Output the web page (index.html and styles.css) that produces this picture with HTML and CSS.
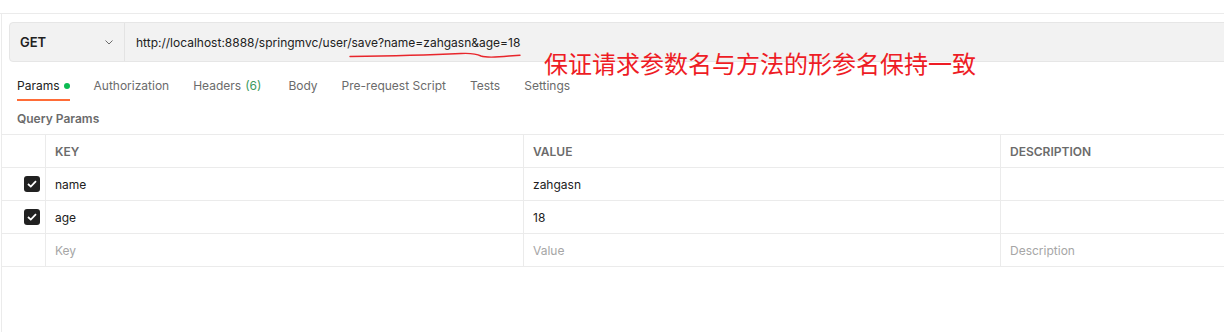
FILE: index.html
```html
<!DOCTYPE html>
<html lang="zh-CN">
<head>
  <meta charset="UTF-8" />
  <title>Postman - Query Params</title>
  <link rel="stylesheet" href="styles.css">
</head>
<body>

  <div class="top-strip"></div>

  <div class="pane">
    <!-- barra richiesta -->
    <div class="request-bar">
      <div class="method">
        <span>GET</span>
        <svg class="chevron" width="8" height="5" viewBox="0 0 8 5"><path d="M0.5 0.5 L4 4 L7.5 0.5" fill="none" stroke="#6b6b6b" stroke-width="1"/></svg>
      </div>
      <div class="url">http://localhost:8888/springmvc/user/save?name=zahgasn&amp;age=18</div>
    </div>

    <!-- tab -->
    <div class="tabs">
      <div class="tab active">Params <span class="dot"></span></div>
      <div class="tab">Authorization</div>
      <div class="tab headers">Headers <span class="count">(6)</span></div>
      <div class="tab">Body</div>
      <div class="tab">Pre-request Script</div>
      <div class="tab">Tests</div>
      <div class="tab">Settings</div>
    </div>

    <div class="section-title">Query Params</div>

    <!-- tabella parametri -->
    <div class="params-table">
      <div class="cell check"></div>
      <div class="cell head">KEY</div>
      <div class="cell head">VALUE</div>
      <div class="cell head">DESCRIPTION</div>

      <div class="cell check"><span class="checkbox"><svg width="10" height="8" viewBox="0 0 10 8"><path d="M1 4 L3.8 6.6 L9 1.2" fill="none" stroke="#fff" stroke-width="1.8"/></svg></span></div>
      <div class="cell">name</div>
      <div class="cell">zahgasn</div>
      <div class="cell"></div>

      <div class="cell check"><span class="checkbox"><svg width="10" height="8" viewBox="0 0 10 8"><path d="M1 4 L3.8 6.6 L9 1.2" fill="none" stroke="#fff" stroke-width="1.8"/></svg></span></div>
      <div class="cell">age</div>
      <div class="cell">18</div>
      <div class="cell"></div>

      <div class="cell check"></div>
      <div class="cell placeholder">Key</div>
      <div class="cell placeholder">Value</div>
      <div class="cell placeholder">Description</div>
    </div>
  </div>

  <!-- annotazione a mano -->
  <svg class="scribble" width="180" height="10" viewBox="0 0 180 10">
    <path d="M1 6.5 C40 6 80 5 112 3.5 C122 3 128 4 132 6 C138 8 145 7.5 160 6 L171 5.2" fill="none" stroke="#e8262c" stroke-width="1.4" stroke-linecap="round"/>
  </svg>
  <div class="note">保证请求参数名与方法的形参名保持一致</div>

</body>
</html>
```

FILE: styles.css
```css
/* Reset e font base */
* {
  margin: 0;
  padding: 0;
  box-sizing: border-box;
}
body {
  position: relative;
  width: 1224px;
  height: 332px;
  overflow: hidden;
  background-color: #fff;
  font-family: Inter, "Noto Sans", sans-serif;
  font-size: 12px;
  color: #212121;
}
.top-strip {
  height: 14px;
  border-bottom: 1px solid #ebebeb;
}
.pane {
  margin-left: 1px;
  height: 318px;
  border-left: 1px solid #ebebeb;
  padding-top: 8px;
  overflow: hidden;
}
/* Barra della richiesta */
.request-bar {
  display: flex;
  height: 40px;
  margin-left: 7px;
  width: 1240px;
  background-color: #f2f2f2;
  border: 1px solid #e6e6e6;
  border-radius: 4px;
}
.method {
  width: 115px;
  display: flex;
  align-items: center;
  justify-content: space-between;
  padding: 0 11px 0 10px;
  border-right: 1px solid #e3e3e3;
  font-size: 13px;
  font-weight: 600;
}
.chevron {
  margin-top: 1px;
}
.url {
  display: flex;
  align-items: center;
  padding-left: 11px;
}
/* Tab */
.tabs {
  display: flex;
  gap: 24px;
  margin-top: 8px;
  padding-left: 15px;
}
.tab {
  display: flex;
  align-items: center;
  gap: 4px;
  padding: 8px 0 5px;
  line-height: 16px;
  color: #6b6b6b;
  border-bottom: 2px solid transparent;
}
.tab.active {
  color: #212121;
  border-bottom-color: #ff6c37;
}
.tab.headers {
  margin-right: 3px;
}
.tab .count {
  color: #3a9a5e;
}
.dot {
  width: 6px;
  height: 6px;
  border-radius: 50%;
  background-color: #0cbb52;
}
.section-title {
  margin-top: 10px;
  padding-left: 15px;
  line-height: 16px;
  font-size: 12px;
  font-weight: 600;
  color: #6b6b6b;
}
/* Tabella parametri */
.params-table {
  display: grid;
  grid-template-columns: 44px 478px 477px 1fr;
  margin-top: 7px;
  border-top: 1px solid #ebebeb;
}
.cell {
  height: 33px;
  display: flex;
  align-items: center;
  padding-left: 9px;
  border-bottom: 1px solid #ebebeb;
  border-right: 1px solid #ebebeb;
}
.cell:nth-child(4n) {
  border-right: none;
}
.cell.head {
  font-weight: 600;
  color: #6b6b6b;
}
.cell.check {
  justify-content: flex-end;
  padding: 0 5px 0 0;
}
.cell.placeholder {
  color: #a6a6a6;
}
.checkbox {
  width: 16px;
  height: 16px;
  border-radius: 3px;
  background-color: #212121;
  display: flex;
  align-items: center;
  justify-content: center;
}
/* Annotazione */
.scribble {
  position: absolute;
  left: 349px;
  top: 50px;
}
.note {
  position: absolute;
  left: 544px;
  top: 51px;
  font-family: "Noto Sans CJK SC", sans-serif;
  font-size: 24px;
  line-height: 24px;
  color: #ee1c25;
}
```
